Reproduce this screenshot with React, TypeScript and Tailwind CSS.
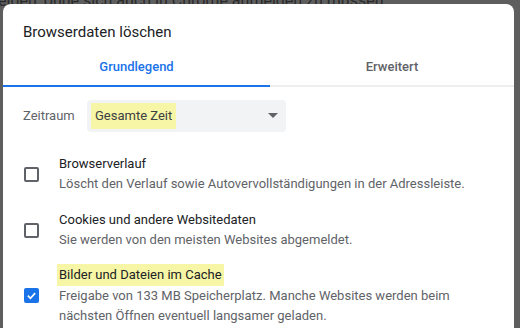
import React from 'react';

function Checkbox({ checked }: { checked?: boolean }) {
  if (checked) {
    return (
      <div className="flex h-[15px] w-[15px] items-center justify-center rounded-[2px] bg-[#1a73e8]">
        <svg width="11" height="11" viewBox="0 0 12 12" fill="none">
          <path d="M2 6.2 L4.8 9 L10 3.4" stroke="#fff" strokeWidth="1.8" />
        </svg>
      </div>
    );
  }
  return <div className="h-[15px] w-[15px] rounded-[2px] border-2 border-[#5f6368]" />;
}

function Option({ title, desc }: { title: string; desc: string }) {
  return (
    <div className="flex items-center">
      <div className="w-[36px] pl-[1px]">
        <Checkbox />
      </div>
      <div className="flex flex-col">
        <div className="text-[13px] leading-[20px] text-[#202124]">{title}</div>
        <div className="text-[13px] leading-[20px] text-[#5f6368]">{desc}</div>
      </div>
    </div>
  );
}

export default function App() {
  return (
    <div className="relative h-[328px] w-[520px] overflow-hidden bg-[#5e5e5e] font-['Roboto',sans-serif]">
      <div className="absolute left-[-2px] top-[-11px] whitespace-nowrap text-[16px] text-[#2a2a2a]">
        eiden, ohne sich auch in Chrome anmelden zu müssen.
      </div>
      <div className="absolute left-[3px] top-[4px] h-[340px] w-[511px] rounded-t-[8px] bg-white">
        <div className="px-[20px] pt-[17px] text-[15px] leading-[22px] text-[#202124]">Browserdaten löschen</div>
        <div className="mt-[12px] flex border-b-2 border-[#eeeeee]">
          <div className="-mb-[2px] flex h-[32px] w-[267px] items-start justify-center border-b-2 border-[#1a73e8] pt-[2px] text-[13px] font-medium text-[#1a73e8]">
            Grundlegend
          </div>
          <div className="flex h-[30px] flex-1 items-start justify-center pt-[2px] text-[13px] font-medium text-[#5f6368]">
            Erweitert
          </div>
        </div>
        <div className="mt-[13px] flex items-center px-[20px]">
          <div className="w-[64px] text-[13px] text-[#5f6368]">Zeitraum</div>
          <div className="flex h-[32px] w-[199px] items-center justify-between rounded-[4px] bg-[#f1f3f4] pl-[4px] pr-[8px]">
            <span className="bg-[#f6f6a6] px-[4px] py-[4px] text-[13px] leading-[18px] text-[#3c4043]">Gesamte Zeit</span>
            <svg width="10" height="6" viewBox="0 0 10 6">
              <path d="M0 0 L10 0 L5 5 Z" fill="#5f6368" />
            </svg>
          </div>
        </div>
        <div className="mt-[22px] flex flex-col gap-[16px] px-[20px]">
          <Option title="Browserverlauf" desc="Löscht den Verlauf sowie Autovervollständigungen in der Adressleiste." />
          <Option title="Cookies und andere Websitedaten" desc="Sie werden von den meisten Websites abgemeldet." />
          <div className="-mt-[2px] flex items-center">
            <div className="w-[36px] pl-[1px]">
              <Checkbox checked />
            </div>
            <div className="flex flex-col">
              <div className="text-[13px] leading-[22px] text-[#202124]">
                <span className="-mx-[2px] inline-block bg-[#f6f6a6] px-[2px] py-[1px] leading-[20px]">Bilder und Dateien im Cache</span>
              </div>
              <div className="text-[13px] leading-[20px] text-[#5f6368]">
                Freigabe von 133 MB Speicherplatz. Manche Websites werden beim
                <br />
                nächsten Öffnen eventuell langsamer geladen.
              </div>
            </div>
          </div>
        </div>
      </div>
    </div>
  );
}
